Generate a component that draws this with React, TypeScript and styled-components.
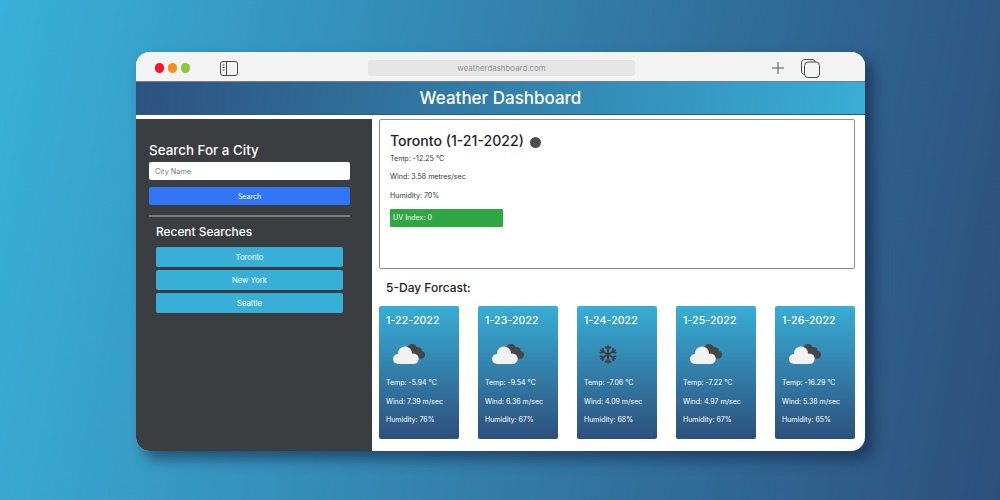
import React from 'react';
import styled, { createGlobalStyle } from 'styled-components';

const GlobalStyle = createGlobalStyle`
  html, body { margin: 0; padding: 0; width: 1000px; height: 500px; overflow: hidden; }
  body { font-family: Inter, "Liberation Sans", sans-serif; }
  * { box-sizing: border-box; }
`;

const forecast = [
  { date: '1-22-2022', temp: '-5.94', wind: '7.39', humidity: 76, icon: 'cloud' },
  { date: '1-23-2022', temp: '-9.54', wind: '6.36', humidity: 67, icon: 'cloud' },
  { date: '1-24-2022', temp: '-7.06', wind: '4.09', humidity: 68, icon: 'snow' },
  { date: '1-25-2022', temp: '-7.22', wind: '4.97', humidity: 67, icon: 'cloud' },
  { date: '1-26-2022', temp: '-16.29', wind: '5.38', humidity: 65, icon: 'cloud' },
];

const CloudIcon = () => (
  <svg width="32" height="20" viewBox="0 0 32 20">
    <g fill="#454648">
      <circle cx="19" cy="5" r="5" />
      <circle cx="24.500" cy="7.500" r="4.500" />
      <circle cx="28.200" cy="10.800" r="3.800" />
      <path d="M14 5L26 5L30 14L22 15Z" />
    </g>
    <g fill="#f2f2f2">
      <circle cx="12" cy="9.500" r="7" />
      <circle cx="5" cy="15" r="5" />
      <circle cx="20.500" cy="14.800" r="5.200" />
      <rect x="5" y="13" width="16" height="7" />
    </g>
  </svg>
);

const FlakeArms = () => (
  <>
    <path d="M9 0.500V18.500" />
    <path d="M6.200 1.500L9 4.300L11.800 1.500M6.200 17.500L9 14.700L11.800 17.500" />
  </>
);

const SnowIcon = () => (
  <svg width="18" height="19" viewBox="0 0 18 19" fill="none" stroke="#3f4347" strokeWidth="1.900">
    <g>
      <FlakeArms />
    </g>
    <g transform="rotate(60 9 9.500)">
      <FlakeArms />
    </g>
    <g transform="rotate(120 9 9.500)">
      <FlakeArms />
    </g>
  </svg>
);

export default function App() {
  return (
    <>
      <GlobalStyle />
      <Page>
        <BrowserWindow>
          <Toolbar>
            <Lights>
              <Light $color="#f0182c" />
              <Light $color="#f5901e" />
              <Light $color="#8cc63f" />
            </Lights>
            <SidebarToggle width="18" height="15" viewBox="0 0 18 15" fill="none" stroke="#4a4a4a" strokeWidth="1">
              <rect x="0.500" y="0.500" width="17" height="14" rx="2.500" />
              <path d="M6.500 0.500V14.500" />
              <path d="M2.500 4H4.500M2.500 6.500H4.500M2.500 9H4.500" />
            </SidebarToggle>
            <AddressBar>weatherdashboard.com</AddressBar>
            <PlusIcon width="14" height="14" viewBox="0 0 14 14" stroke="#555" strokeWidth="1" fill="none">
              <path d="M7 1V13M1 7H13" />
            </PlusIcon>
            <TabsIcon width="19" height="19" viewBox="0 0 19 19" fill="none" stroke="#4a4a4a" strokeWidth="1">
              <path d="M3.500 15.500C1.800 15.200 0.500 14 0.500 12V4C0.500 2 2 0.500 4 0.500H11C12.700 0.500 14 1.500 14.500 3" />
              <rect x="3.500" y="3" width="15" height="15.500" rx="3.500" />
            </TabsIcon>
          </Toolbar>
          <Banner>Weather Dashboard</Banner>
          <Content>
            <Sidebar>
              <SearchTitle>Search For a City</SearchTitle>
              <CityInput placeholder="City Name" />
              <SearchButton>Search</SearchButton>
              <Divider />
              <Recent>
                <RecentTitle>Recent Searches</RecentTitle>
                <RecentButton>Toronto</RecentButton>
                <RecentButton>New York</RecentButton>
                <RecentButton>Seattle</RecentButton>
              </Recent>
            </Sidebar>
            <Main>
              <TodayCard>
                <CityHeading>
                  Toronto (1-21-2022)
                  <WeatherDot />
                </CityHeading>
                <TodayLine>Temp: -12.25 °C</TodayLine>
                <TodayLine>Wind: 3.58 metres/sec</TodayLine>
                <TodayLine>Humidity: 70%</TodayLine>
                <UvBadge>UV Index: 0</UvBadge>
              </TodayCard>
              <ForecastTitle>5-Day Forcast:</ForecastTitle>
              <ForecastRow>
                {forecast.map((day) => (
                  <DayCard key={day.date}>
                    <DayDate>{day.date}</DayDate>
                    <DayIcon $snow={day.icon === 'snow'}>
                      {day.icon === 'snow' ? <SnowIcon /> : <CloudIcon />}
                    </DayIcon>
                    <DayLine>Temp: {day.temp} °C</DayLine>
                    <DayLine>Wind: {day.wind} m/sec</DayLine>
                    <DayLine>Humidity: {day.humidity}%</DayLine>
                  </DayCard>
                ))}
              </ForecastRow>
            </Main>
          </Content>
        </BrowserWindow>
      </Page>
    </>
  );
}

const Page = styled.div`
  width: 1000px;
  height: 500px;
  padding: 52px 0 0 136px;
  background: linear-gradient(100deg, #39b0d9 0%, #2d4f7c 100%);
`;

const BrowserWindow = styled.div`
  width: 729px;
  height: 399px;
  background: #fff;
  border-radius: 14px;
  overflow: hidden;
  box-shadow: 8px 8px 14px rgba(20, 35, 65, 0.6);
  display: flex;
  flex-direction: column;
`;

const Toolbar = styled.div`
  height: 30px;
  flex: none;
  background: #f3f3f3;
  border-bottom: 1px solid #7c7c7c;
  display: flex;
  align-items: center;
  padding: 3px 0 0 18.500px;
`;

const Lights = styled.div`
  display: flex;
  gap: 3.500px;
  width: 65.500px;
`;

const Light = styled.span<{ $color: string }>`
  width: 9.500px;
  height: 9.500px;
  border-radius: 50%;
  background: ${(p) => p.$color};
`;

const SidebarToggle = styled.svg`
  flex: none;
`;

const AddressBar = styled.div`
  width: 267px;
  height: 16px;
  margin-left: 130px;
  background: #e6e6e6;
  border-radius: 3px;
  color: #929292;
  font-size: 7.900px;
  line-height: 16px;
  text-align: center;
`;

const PlusIcon = styled.svg`
  margin-left: 136px;
  flex: none;
`;

const TabsIcon = styled.svg`
  margin-left: 16px;
  flex: none;
`;

const Banner = styled.div`
  height: 33px;
  flex: none;
  background: linear-gradient(95deg, #2d5280 0%, #38aed6 100%);
  border-bottom: 1px solid #2b5a85;
  color: #fff;
  font-size: 17px;
  font-weight: 500;
  line-height: 32px;
  text-align: center;
`;

const Content = styled.div`
  flex: 1;
  display: flex;
  padding-top: 4px;
  min-height: 0;
`;

const Sidebar = styled.aside`
  width: 236px;
  flex: none;
  background: #3a3e41;
  padding: 22px 22px 0 13px;
`;

const SearchTitle = styled.h2`
  margin: 0;
  color: #fff;
  font-size: 13.400px;
  font-weight: 500;
  line-height: 18px;
`;

const CityInput = styled.input`
  display: block;
  width: 201px;
  height: 18px;
  margin-top: 3px;
  padding: 0 6px;
  border: none;
  border-radius: 2px;
  background: #fff;
  font-family: inherit;
  font-size: 7.300px;
  &::placeholder { color: #777; opacity: 1; }
`;

const SearchButton = styled.button`
  display: block;
  width: 201px;
  height: 18px;
  margin-top: 7px;
  padding: 0;
  border: none;
  border-radius: 2px;
  background: #3276f6;
  color: #fff;
  font-family: inherit;
  font-size: 7px;
`;

const Divider = styled.hr`
  width: 201px;
  height: 2px;
  margin: 10px 0 0;
  border: none;
  background: #7c7f81;
`;

const Recent = styled.div`
  padding: 6px 7px 0;
`;

const RecentTitle = styled.h3`
  margin: 0 0 7px;
  color: #fff;
  font-size: 11.900px;
  font-weight: 500;
  line-height: 17px;
`;

const RecentButton = styled.button`
  display: block;
  width: 187px;
  height: 20px;
  margin-bottom: 3px;
  padding: 0;
  border: none;
  border-radius: 2px;
  background: #38afd7;
  color: #fff;
  font-family: inherit;
  font-size: 7.700px;
`;

const Main = styled.main`
  flex: 1;
  padding: 0 10px 0 7px;
  min-width: 0;
`;

const TodayCard = styled.section`
  height: 150px;
  border: 1px solid #8d8d8d;
  border-radius: 2px;
  padding: 12px 10px;
`;

const CityHeading = styled.h2`
  margin: 0 0 3.500px;
  display: flex;
  align-items: center;
  color: #1e1e1e;
  font-size: 14.100px;
  font-weight: 500;
  line-height: 18px;
`;

const WeatherDot = styled.span`
  width: 11px;
  height: 11px;
  margin: 2px 0 0 6px;
  border-radius: 50%;
  background: #4d4d4f;
`;

const TodayLine = styled.p`
  margin: 0 0 8.500px;
  color: #333;
  font-size: 7.100px;
  line-height: 10px;
`;

const UvBadge = styled.div`
  width: 113px;
  height: 18px;
  margin-top: 5.500px;
  padding-left: 3px;
  border-radius: 1px;
  background: #30a745;
  color: #fff;
  font-size: 7.100px;
  line-height: 18px;
`;

const ForecastTitle = styled.h3`
  margin: 11px 0 10px 7px;
  color: #222;
  font-size: 12px;
  font-weight: 500;
  line-height: 16px;
`;

const ForecastRow = styled.div`
  display: flex;
  justify-content: space-between;
`;

const DayCard = styled.article`
  width: 80px;
  height: 133px;
  padding: 7px 7px 0;
  border-radius: 2px;
  background: linear-gradient(180deg, #38aed6 0%, #2d4f7c 100%);
  color: #fff;
`;

const DayDate = styled.div`
  font-size: 10.500px;
  font-weight: 500;
  line-height: 15px;
  letter-spacing: 0.1px;
`;

const DayIcon = styled.div<{ $snow: boolean }>`
  height: 20px;
  margin: 16px 0 14px ${(p) => (p.$snow ? '15px' : '7px')};
  display: flex;
  align-items: center;
`;

const DayLine = styled.p`
  margin: 0 0 8.500px;
  font-size: 7px;
  line-height: 10px;
  white-space: nowrap;
`;
